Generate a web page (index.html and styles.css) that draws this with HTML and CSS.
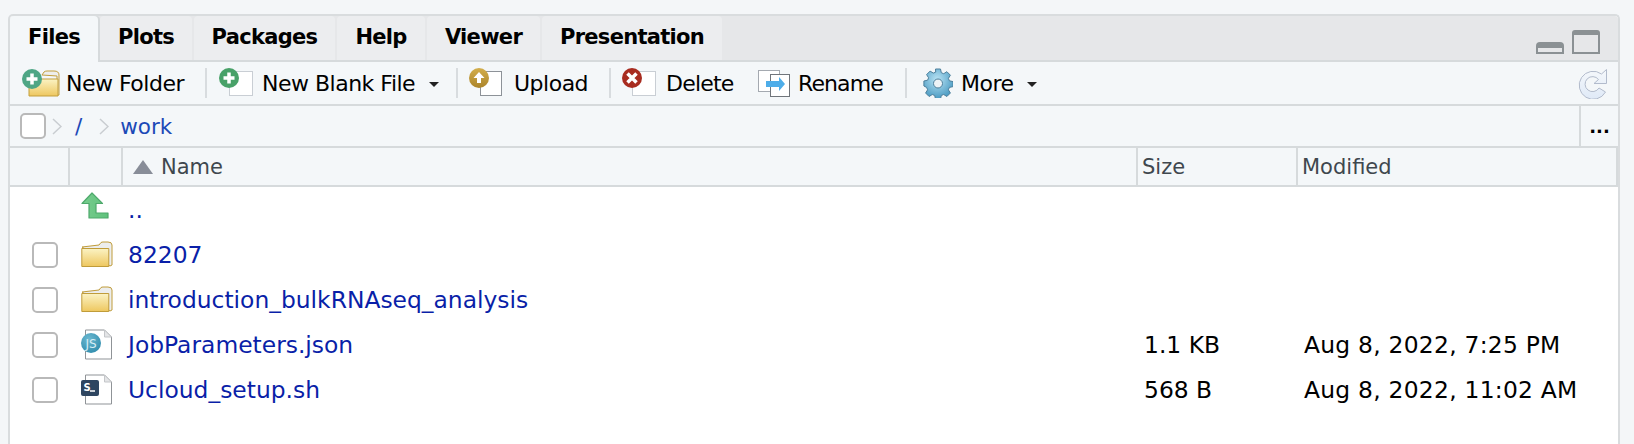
FILE: index.html
```html
<!DOCTYPE html>
<html lang="en">
  <head>
    <meta charset="UTF-8" />
    <title>Files pane</title>
    <link rel="stylesheet" href="styles.css">
  </head>
  <body>
    <svg class="defs" width="0" height="0">
      <defs>
        <linearGradient id="folderFill" x1="0" y1="0" x2="0" y2="1">
          <stop offset="0" stop-color="#fbf3c4" />
          <stop offset="1" stop-color="#eec75f" />
        </linearGradient>
        <linearGradient id="arrowFill" x1="0" y1="0" x2="1" y2="0">
          <stop offset="0" stop-color="#78cc8e" />
          <stop offset="1" stop-color="#5fc27c" />
        </linearGradient>
        <linearGradient id="goldFill" x1="0" y1="0" x2="0" y2="1">
          <stop offset="0" stop-color="#d3ae4c" />
          <stop offset="1" stop-color="#ab842a" />
        </linearGradient>
        <radialGradient id="gearFill" cx="0.45" cy="0.35" r="0.7">
          <stop offset="0" stop-color="#b9e3f4" />
          <stop offset="1" stop-color="#3f93bd" />
        </radialGradient>
        <radialGradient id="jsFill" cx="0.4" cy="0.3" r="0.8">
          <stop offset="0" stop-color="#6cb8d0" />
          <stop offset="1" stop-color="#2c8aab" />
        </radialGradient>
        <linearGradient id="refreshFill" x1="0" y1="0" x2="0" y2="1">
          <stop offset="0" stop-color="#f5f8fb" />
          <stop offset="1" stop-color="#dfe9f7" />
        </linearGradient>
      </defs>
    </svg>

    <div class="pane">
      <div class="tabbar">
        <div class="tabs">
          <div class="tab active">Files</div>
          <div class="tab">Plots</div>
          <div class="tab">Packages</div>
          <div class="tab">Help</div>
          <div class="tab">Viewer</div>
          <div class="tab">Presentation</div>
        </div>
        <div class="window-btns">
          <svg width="28" height="12" viewBox="0 0 28 12">
            <path d="M0 12V4q0-4 4-4h20q4 0 4 4v8z" fill="#8b9194" />
            <rect x="2" y="6" width="24" height="4" fill="#e6e7e9" />
          </svg>
          <svg width="28" height="24" viewBox="0 0 28 24">
            <path d="M0 24V3q0-3 3-3h22q3 0 3 3v21z" fill="#8b9194" />
            <rect x="2" y="5" width="24" height="17" fill="#e6e7e9" />
          </svg>
        </div>
      </div>

      <div class="toolbar">
        <div class="tool tool-folder">
          <svg class="ico" width="38" height="30" viewBox="0 0 38 30">
            <path d="M20 7l2-3q1-1 3-1h7q5 0 5 4v20h-2V8z" fill="#eeeeec" stroke="#c39f3d" />
            <path d="M7 11h29v17H7z" fill="url(#folderFill)" stroke="#c39f3d" />
            <circle cx="10" cy="11" r="10" fill="#4ea685" />
            <path d="M4.500 11h11M10 5.500v11" stroke="#fff" stroke-width="3.500" />
          </svg>
          <span>New Folder</span>
        </div>
        <i class="sep"></i>
        <div class="tool tool-blank">
          <svg class="ico" width="34" height="30" viewBox="0 0 34 30">
            <rect x="10.500" y="3.500" width="23" height="24" fill="#fff" stroke="#c9ced4" />
            <circle cx="10" cy="10" r="10" fill="#48a168" />
            <path d="M4.500 10h11M10 4.500v11" stroke="#fff" stroke-width="3.500" />
          </svg>
          <span>New Blank File</span>
          <i class="caret"></i>
        </div>
        <i class="sep"></i>
        <div class="tool tool-upload">
          <svg class="ico" width="34" height="30" viewBox="0 0 34 30">
            <rect x="11.500" y="3.500" width="21" height="24" fill="#fff" stroke="#8d9298" />
            <circle cx="10" cy="10" r="10" fill="url(#goldFill)" />
            <path d="M10 4l5.500 6H12v5H8v-5H4.500z" fill="#fff" />
          </svg>
          <span>Upload</span>
        </div>
        <i class="sep"></i>
        <div class="tool tool-delete">
          <svg class="ico" width="34" height="30" viewBox="0 0 34 30">
            <rect x="10.500" y="3.500" width="23" height="24" fill="#fff" stroke="#c9ced4" />
            <circle cx="10" cy="10" r="10" fill="#a82c20" />
            <path d="M5.500 5.500l9 9M14.500 5.500l-9 9" stroke="#fff" stroke-width="3.500" />
          </svg>
          <span>Delete</span>
        </div>
        <div class="tool tool-rename">
          <svg class="ico" width="32" height="28" viewBox="0 0 32 28">
            <rect x="0.500" y="1.500" width="21" height="21" fill="#fff" stroke="#a4a9b0" />
            <rect x="12.500" y="5.500" width="19" height="22" fill="#fff" stroke="#70757b" />
            <path d="M8 12h13V8l6 7-6 7v-4H8z" fill="#4eade9" />
          </svg>
          <span>Rename</span>
        </div>
        <i class="sep"></i>
        <div class="tool tool-more">
          <svg class="ico" width="30" height="30" viewBox="0 0 30 30">
            <path d="M12.500 1h5l.8 3.700 2.400 1 3.200-2 3.500 3.500-2 3.200 1 2.400 3.700.8v5l-3.700.8-1 2.400 2 3.200-3.500 3.500-3.200-2-2.400 1-.8 3.700h-5l-.8-3.700-2.400-1-3.200 2-3.500-3.500 2-3.200-1-2.400L.9 18v-5l3.700-.8 1-2.400-2-3.200 3.500-3.500 3.200 2 2.400-1z" fill="url(#gearFill)" stroke="#4d7f9b" />
            <circle cx="15" cy="15.500" r="4.500" fill="#eef3f6" stroke="#4d7f9b" />
          </svg>
          <span>More</span>
          <i class="caret"></i>
        </div>
        <svg class="refresh" width="30" height="31" viewBox="0 0 30 31">
          <path d="M28.500 1.500v14H16l4.500-4A7.500 7.500 0 1 0 21 20l6.500 4A14 14 0 1 1 23.500 6z" fill="url(#refreshFill)" stroke="#b2bbcc" stroke-width="1" />
        </svg>
      </div>

      <div class="pathbar">
        <div class="path">
          <i class="check"></i>
          <svg class="chev first" width="10" height="17" viewBox="0 0 10 17">
            <path d="M1 1l8 7.500-8 7.500" fill="none" stroke="#c9cdd1" stroke-width="1.500" />
          </svg>
          <a class="crumb slash">/</a>
          <svg class="chev" width="10" height="17" viewBox="0 0 10 17">
            <path d="M1 1l8 7.500-8 7.500" fill="none" stroke="#c9cdd1" stroke-width="1.500" />
          </svg>
          <a class="crumb">work</a>
        </div>
        <div class="dots">...</div>
      </div>

      <div class="grid head">
        <div></div>
        <div></div>
        <div class="cell"><i class="sort"></i>Name</div>
        <div class="cell">Size</div>
        <div class="cell">Modified</div>
      </div>

      <div class="grid row">
        <div></div>
        <div class="icon-cell arrow">
          <svg width="28" height="27" viewBox="0 0 28 27">
            <path d="M11 1l10.500 10.500H15v9.500h12v5H8V11.500H1z" fill="url(#arrowFill)" stroke="#4ea96c" stroke-width="1.200" stroke-linejoin="round" />
          </svg>
        </div>
        <div class="name"><a>..</a></div>
        <div></div>
        <div></div>
      </div>
      <div class="grid row">
        <div class="check-cell"><i class="check"></i></div>
        <div class="icon-cell">
          <svg width="32" height="27" viewBox="0 0 32 27">
            <path d="M1 6l17-2 2-2.500q1-.5 2-.5h5q4 0 4 3v20l-2 1z" fill="#eceded" stroke="#c09c3a" />
            <path d="M.8 7.500h27v18H.8z" fill="url(#folderFill)" stroke="#c09c3a" />
          </svg>
        </div>
        <div class="name"><a>82207</a></div>
        <div></div>
        <div></div>
      </div>
      <div class="grid row">
        <div class="check-cell"><i class="check"></i></div>
        <div class="icon-cell">
          <svg width="32" height="27" viewBox="0 0 32 27">
            <path d="M1 6l17-2 2-2.500q1-.5 2-.5h5q4 0 4 3v20l-2 1z" fill="#eceded" stroke="#c09c3a" />
            <path d="M.8 7.500h27v18H.8z" fill="url(#folderFill)" stroke="#c09c3a" />
          </svg>
        </div>
        <div class="name"><a>introduction_bulkRNAseq_analysis</a></div>
        <div></div>
        <div></div>
      </div>
      <div class="grid row">
        <div class="check-cell"><i class="check"></i></div>
        <div class="icon-cell">
          <svg width="32" height="31" viewBox="0 0 32 31">
            <path d="M4.500 1h19l7 7v22h-26z" fill="#fff" stroke="#8f9397" />
            <path d="M23.500 1v7h7z" fill="#e4e5e7" stroke="#c4c6c9" />
            <circle cx="10" cy="14" r="10" fill="url(#jsFill)" />
            <text class="js" x="10" y="18.500">JS</text>
          </svg>
        </div>
        <div class="name"><a>JobParameters.json</a></div>
        <div class="value">1.1 KB</div>
        <div class="value date">Aug 8, 2022, 7:25 PM</div>
      </div>
      <div class="grid row">
        <div class="check-cell"><i class="check"></i></div>
        <div class="icon-cell">
          <svg width="32" height="31" viewBox="0 0 32 31">
            <path d="M4.500 1h19l7 7v22h-26z" fill="#fff" stroke="#8f9397" />
            <path d="M23.500 1v7h7z" fill="#e4e5e7" stroke="#c4c6c9" />
            <rect x="0" y="6" width="18" height="16" rx="2" fill="#2e4560" />
            <text class="sh" x="2.500" y="16.500">S</text>
            <path d="M9 17h5" stroke="#fff" stroke-width="1.500" />
          </svg>
        </div>
        <div class="name"><a>Ucloud_setup.sh</a></div>
        <div class="value">568 B</div>
        <div class="value date">Aug 8, 2022, 11:02 AM</div>
      </div>
    </div>
  </body>
</html>
```

FILE: styles.css
```css
html,
body {
  height: 100%;
}

body {
  margin: 0;
  overflow: hidden;
  background-color: #f4f6f8;
  font-family: "DejaVu Sans", sans-serif;
  font-size: 20px;
  color: #000;
}

.defs {
  position: absolute;
}

.pane {
  margin: 14px 0 0 8px;
  width: 1612px;
  height: 440px;
  box-sizing: border-box;
  background-color: #fff;
  border: 2px solid #d9dcde;
  border-bottom: 0;
  border-radius: 5px 5px 0 0;
}

.tabbar {
  display: flex;
  justify-content: space-between;
  height: 44px;
  background-color: #e6e7e9;
  border-bottom: 2px solid #d6dadc;
  border-radius: 3px 3px 0 0;
}

.tabs {
  display: grid;
  grid-template-columns: 88px 92px 141px 88px 113px 180px;
  column-gap: 2px;
}

.tab {
  height: 44px;
  background-color: #ecedef;
  border-radius: 4px 4px 0 0;
  font-size: 21px;
  font-weight: bold;
  letter-spacing: -0.7px;
  line-height: 42px;
  text-align: center;
}

.tab.active {
  height: 46px;
  background-color: #f4f7f9;
  position: relative;
  box-shadow: 2px 0 0 #d6dadc;
}

.window-btns {
  display: flex;
  align-items: flex-end;
  gap: 8px;
  padding: 0 18px 6px 0;
}

.toolbar {
  display: flex;
  align-items: center;
  height: 42px;
  background-color: #f4f7f9;
  border-bottom: 2px solid #d6dadc;
  font-size: 22px;
  letter-spacing: -0.5px;
}

.tool {
  display: flex;
  align-items: center;
  height: 100%;
  box-sizing: border-box;
}

.tool-folder {
  width: 195px;
  padding-left: 12px;
}

.tool-folder span {
  margin-left: 6px;
}

.tool-blank {
  width: 249px;
  padding-left: 12px;
}

.tool-blank span {
  margin-left: 9px;
}

.tool-upload {
  width: 151px;
  padding-left: 11px;
}

.tool-upload span {
  margin-left: 11px;
}

.tool-delete {
  width: 147px;
  padding-left: 11px;
}

.tool-delete span {
  margin-left: 10px;
  letter-spacing: -0.8px;
}

.tool-rename {
  width: 147px;
}

.tool-rename span {
  margin-left: 8px;
  letter-spacing: -0.9px;
}

.tool-more {
  padding-left: 16px;
}

.tool-more span {
  margin-left: 8px;
}

.tool-more .caret {
  margin-left: 13px;
}

.sep {
  width: 2px;
  height: 30px;
  background-color: #d8dcdf;
}

.caret {
  width: 0;
  height: 0;
  margin: 2px 0 0 14px;
  border: 5px solid transparent;
  border-top-color: #222;
  border-bottom: 0;
}

.refresh {
  margin-left: auto;
  margin-right: 10px;
}

.pathbar {
  display: flex;
  justify-content: space-between;
  height: 40px;
  background-color: #f4f7f9;
  border-bottom: 2px solid #d6dadc;
  font-size: 21.5px;
}

.path {
  display: flex;
  align-items: center;
  padding-left: 10px;
}

.check {
  display: block;
  width: 22px;
  height: 22px;
  background-color: #fff;
  border: 2px solid #b9b9b9;
  border-radius: 5px;
}

.chev.first {
  margin-left: 6px;
}

.crumb {
  margin-left: 11px;
  color: #1c49b7;
}

.crumb.slash {
  margin: 0 17px 0 13px;
}

.dots {
  width: 39px;
  border-left: 2px solid #d6dadc;
  font-size: 18px;
  font-weight: bold;
  line-height: 38px;
  text-align: center;
  padding-top: 2px;
  box-sizing: border-box;
}

.grid {
  display: grid;
  grid-template-columns: 58px 53px 1015px 160px 1fr;
}

.head {
  height: 37px;
  background-color: #f4f7f9;
  color: #3f474e;
  font-size: 21px;
  border-right: 2px solid #d6dadc;
  border-bottom: 2px solid #d6dadc;
}

.head > div + div {
  border-left: 2px solid #d6dadc;
}

.cell {
  display: flex;
  align-items: center;
  padding-left: 4px;
}

.sort {
  width: 0;
  height: 0;
  margin: 0 8px 0 6px;
  border: 10px solid transparent;
  border-bottom: 14px solid #888d98;
  border-top: 0;
}

.row {
  height: 45px;
  align-items: center;
  font-size: 23.4px;
}

.check-cell {
  padding-left: 22px;
}

.icon-cell {
  display: flex;
  padding-left: 13px;
}

.icon-cell.arrow {
  margin-top: -8px;
}

.name {
  padding-left: 7px;
}

.name a {
  color: #0a1fa8;
}

.value {
  padding-left: 8px;
}

.date {
  letter-spacing: 0.25px;
}

.js {
  fill: #d8eef5;
  font-family: "DejaVu Sans", sans-serif;
  font-size: 12px;
  text-anchor: middle;
}

.sh {
  fill: #fff;
  font-family: "DejaVu Sans", sans-serif;
  font-size: 10px;
  font-weight: bold;
}
```
